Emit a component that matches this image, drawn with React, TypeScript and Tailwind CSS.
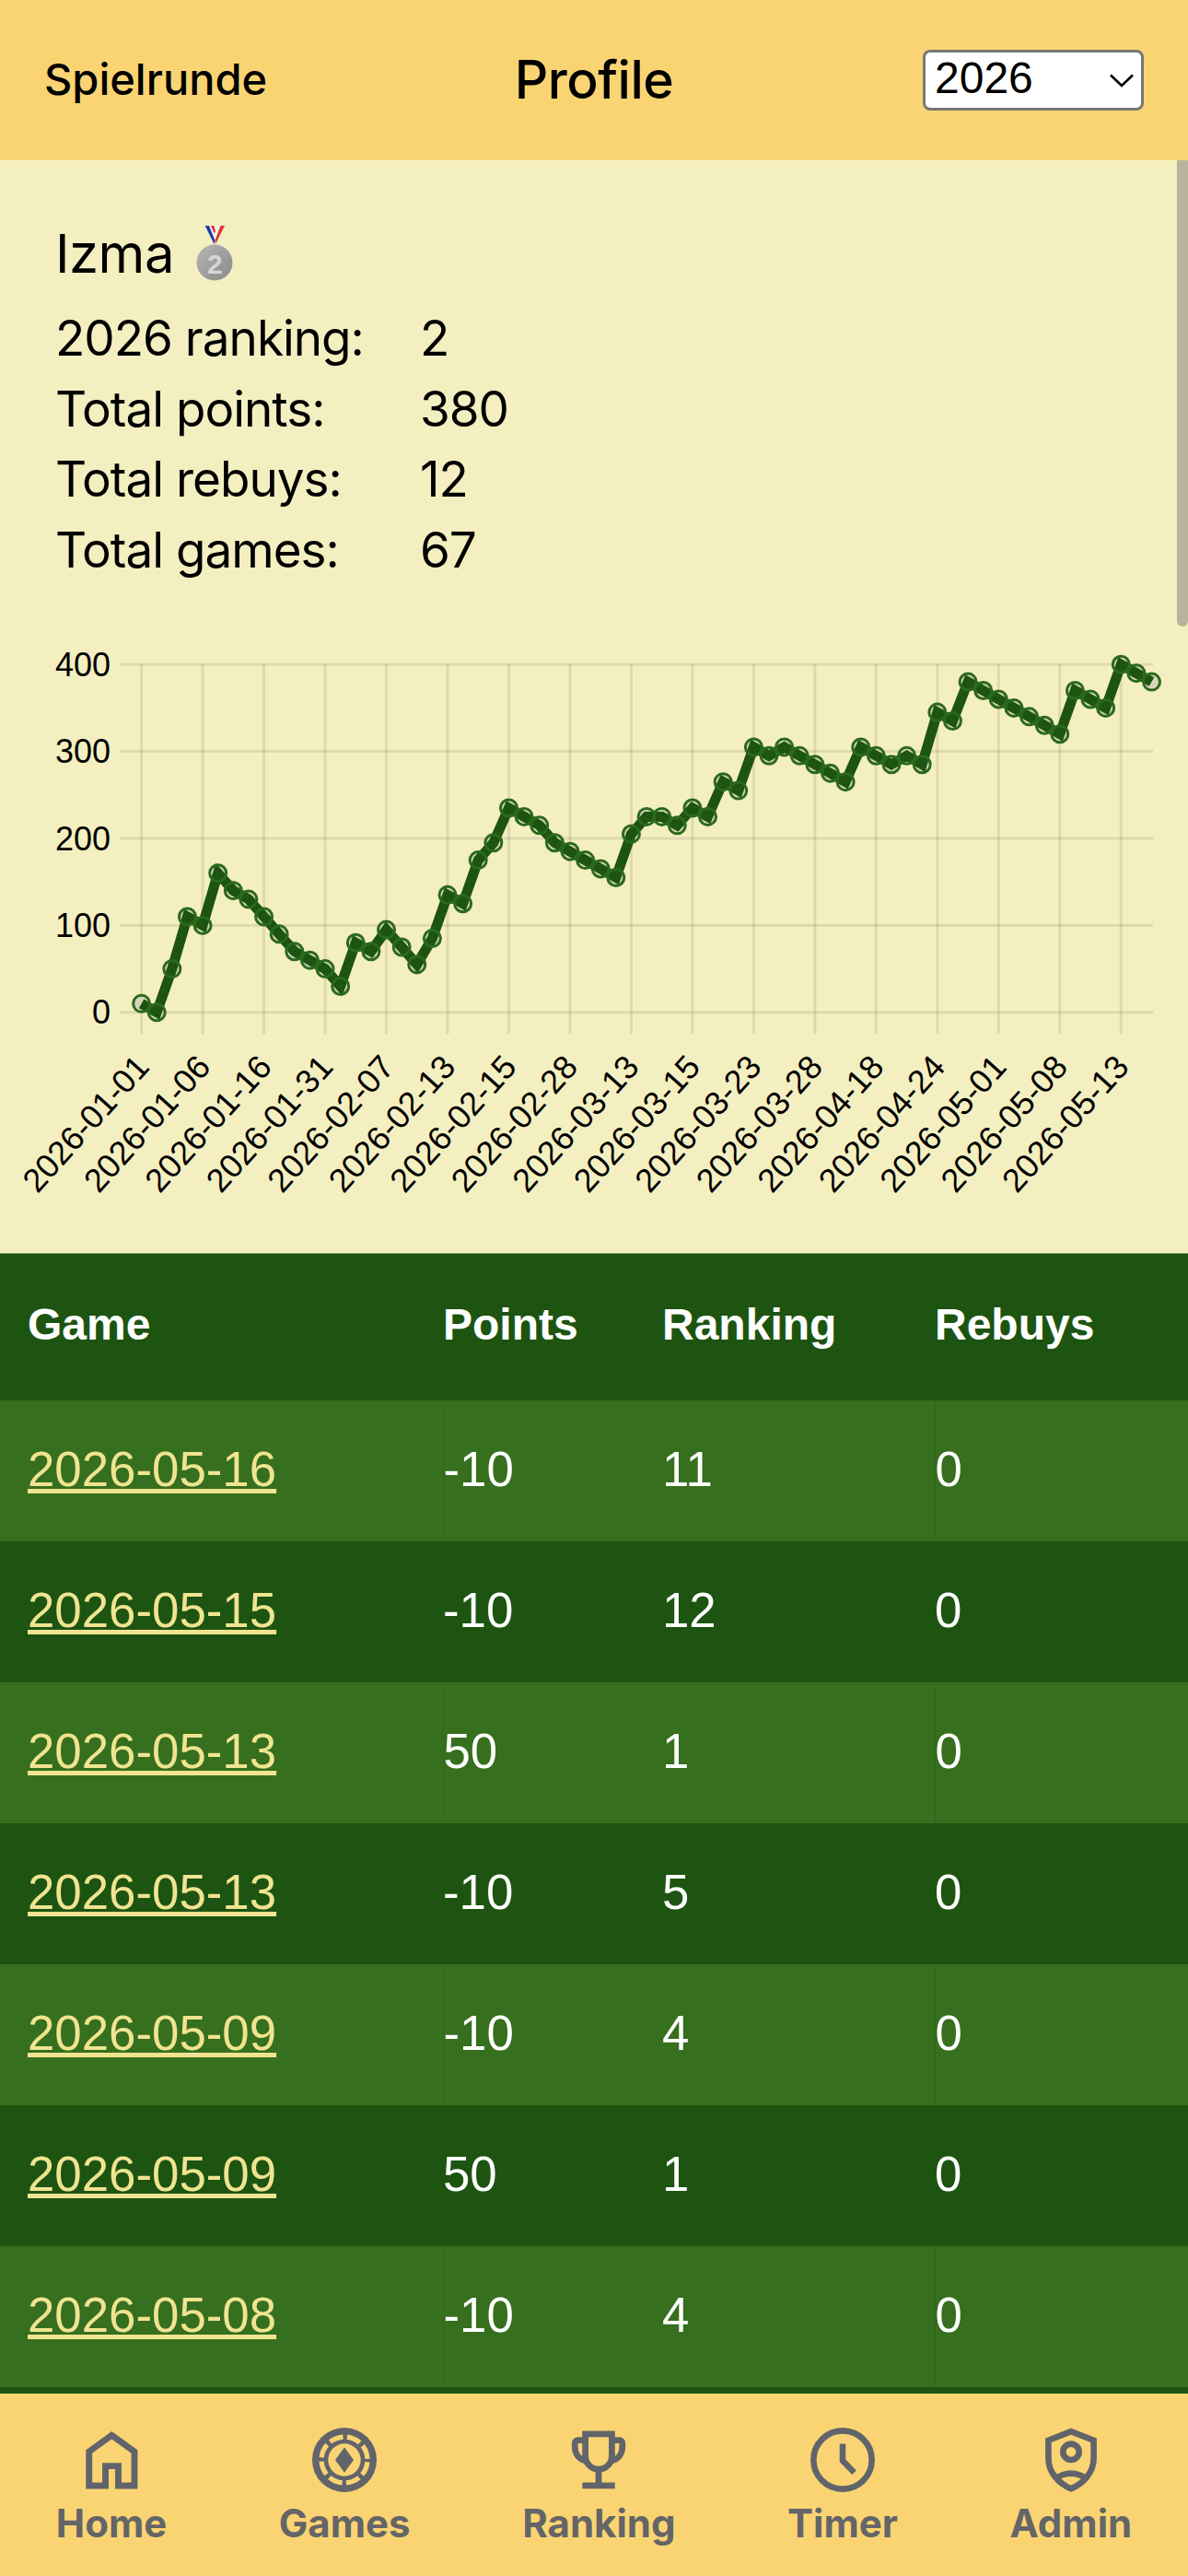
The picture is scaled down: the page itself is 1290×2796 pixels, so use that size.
import React from 'react';

const values = [
  10, 0, 50, 110, 100, 160, 140, 130, 110, 90, 70, 60, 50, 30, 80, 70, 95, 75, 55, 85, 135, 125, 175, 195, 235, 225,
  215, 195, 185, 175, 165, 155, 205, 225, 225, 215, 235, 225, 265, 255, 305, 295, 305, 295, 285, 275, 265, 305, 295,
  285, 295, 285, 345, 335, 380, 370, 360, 350, 340, 330, 320, 370, 360, 350, 400, 390, 380,
];

const labels = [
  '2026-01-01', '2026-01-06', '2026-01-16', '2026-01-31', '2026-02-07', '2026-02-13', '2026-02-15', '2026-02-28',
  '2026-03-13', '2026-03-15', '2026-03-23', '2026-03-28', '2026-04-18', '2026-04-24', '2026-05-01', '2026-05-08',
  '2026-05-13',
];

const games = [
  ['2026-05-16', '-10', '11', '0'],
  ['2026-05-15', '-10', '12', '0'],
  ['2026-05-13', '50', '1', '0'],
  ['2026-05-13', '-10', '5', '0'],
  ['2026-05-09', '-10', '4', '0'],
  ['2026-05-09', '50', '1', '0'],
  ['2026-05-08', '-10', '4', '0'],
];

const stats = [
  ['2026 ranking:', '2'],
  ['Total points:', '380'],
  ['Total rebuys:', '12'],
  ['Total games:', '67'],
];

const X0 = 153.6;
const STEP = 16.62;
const xAt = (i: number) => X0 + i * STEP;
// chart coordinates are relative to the svg top
const yAt = (v: number) => 408.8 - v * 0.944;

const Chart = () => {
  const line = values.map((v, i) => `${xAt(i)},${yAt(v)}`).join(' ');
  return (
    <svg className="block mt-[54px]" width="1290" height="670" viewBox="0 0 1290 670">
      {[0, 100, 200, 300, 400].map((v) => (
        <g key={v}>
          <line x1="130" x2="1252" y1={yAt(v)} y2={yAt(v)} stroke="rgba(0,0,0,0.09)" strokeWidth="3" />
          <text
            x="120"
            y={yAt(v)}
            textAnchor="end"
            dominantBaseline="central"
            fontFamily="Liberation Sans"
            fontSize="36"
            fill="#000"
          >
            {v}
          </text>
        </g>
      ))}
      {labels.map((label, i) => (
        <g key={label}>
          <line x1={xAt(i * 4)} x2={xAt(i * 4)} y1="31" y2="432" stroke="rgba(0,0,0,0.09)" strokeWidth="3" />
          <text
            transform={`translate(${xAt(i * 4) + 1} 461) rotate(-48)`}
            textAnchor="end"
            dominantBaseline="central"
            fontFamily="Liberation Sans"
            fontSize="36"
            fill="#000"
          >
            {label}
          </text>
        </g>
      ))}
      {values.map((v, i) => (
        <circle key={i} cx={xAt(i)} cy={yAt(v)} r="9" fill="#d6d5bb" />
      ))}
      <polyline points={line} fill="none" stroke="#1d5411" strokeWidth="11" strokeLinejoin="miter" />
      {values.map((v, i) => (
        <circle key={i} cx={xAt(i)} cy={yAt(v)} r="9" fill="none" stroke="#2b6a1c" strokeWidth="3" />
      ))}
    </svg>
  );
};

const Medal = () => (
  <svg className="ml-[24px]" width="40" height="60" viewBox="0 0 40 60">
    <defs>
      <linearGradient id="disc" x1="0" y1="0" x2="1" y2="1">
        <stop offset="0" stopColor="#b5b5b5" />
        <stop offset="1" stopColor="#8a8a8a" />
      </linearGradient>
    </defs>
    <polygon points="9.7,0 31,0 21,20 19.5,20" fill="#f4f4f0" />
    <polygon points="9.7,0 14,0 20.5,16 19.5,20" fill="#1f3fa8" />
    <polygon points="16,0 19.5,0 21,7 19.5,8" fill="#e0362c" />
    <polygon points="26.5,0 31,0 21,20 20.5,16" fill="#e0362c" />
    <circle cx="20" cy="40" r="19.5" fill="url(#disc)" />
    <text
      x="20"
      y="41"
      textAnchor="middle"
      dominantBaseline="central"
      fontFamily="Liberation Sans"
      fontWeight="700"
      fontSize="30"
      fill="#d6d6d6"
    >
      2
    </text>
  </svg>
);

const ICON = 'w-[72px] h-[72px] text-[#61646a]';

const HomeIcon = () => (
  <svg className={ICON} viewBox="0 0 24 24" fill="none" stroke="currentColor" strokeWidth="2.3">
    <path d="M3.9 21.33V9L12.1 3.1L20.33 9V21.33H14.5V14.22H9.84V21.33Z" />
  </svg>
);

const ChipIcon = () => (
  <svg className={ICON} viewBox="0 0 24 24">
    <circle cx="12" cy="12" r="11.67" fill="currentColor" />
    <circle cx="12" cy="12" r="8.33" fill="none" stroke="#fad473" strokeWidth="1.77" strokeDasharray="5.04 1.5" strokeDashoffset="-0.75" />
    <circle cx="12" cy="12" r="5.9" fill="#fad473" />
    <polygon points="12,7.45 15.33,12 12,16.55 8.67,12" fill="currentColor" />
  </svg>
);

const TrophyIcon = () => (
  <svg className={ICON} viewBox="0 0 24 24" fill="none" stroke="currentColor" strokeWidth="2.25">
    <path d="M7.2 2.6H16.8V10.6A4.8 4.8 0 0 1 7.2 10.6Z" />
    <path d="M7.2 4.9H4.4A1 1 0 0 0 3.4 5.9V7C3.4 10 5 12 7.6 12.4" />
    <path d="M16.8 4.9H19.6A1 1 0 0 1 20.6 5.9V7C20.6 10 19 12 16.4 12.4" />
    <path d="M12 15.5V21M6.1 21.33H17.9" />
  </svg>
);

const ClockIcon = () => (
  <svg className={ICON} viewBox="0 0 24 24" fill="none" stroke="currentColor" strokeWidth="2.2">
    <circle cx="12" cy="12" r="10.55" />
    <path d="M12 6.2V12.3L16.2 16.6" />
  </svg>
);

const ShieldIcon = () => (
  <svg className={ICON} viewBox="0 0 24 24" fill="none" stroke="currentColor" strokeWidth="2.2">
    <path d="M12 1.7L20.2 4.9V11.5C20.2 16.5 16.5 20.5 12 22.4C7.5 20.5 3.8 16.5 3.8 11.5V4.9Z" />
    <circle cx="12" cy="9.1" r="2.9" />
    <path d="M6.2 18.9Q12 14.8 17.8 18.9" />
  </svg>
);

const navItems = [
  { label: 'Home', icon: <HomeIcon /> },
  { label: 'Games', icon: <ChipIcon /> },
  { label: 'Ranking', icon: <TrophyIcon /> },
  { label: 'Timer', icon: <ClockIcon /> },
  { label: 'Admin', icon: <ShieldIcon /> },
];

const App = () => {
  return (
    <div className="w-[1290px] h-[2796px] flex flex-col overflow-hidden bg-[#f4efc0] font-['Inter',sans-serif] text-black">
      {/* Header */}
      <header className="h-[174px] shrink-0 bg-[#fad473] flex items-center justify-between pl-[48px] pr-[48px]">
        <span className="text-[47px] font-medium w-[240px] pb-[2px]">Spielrunde</span>
        <h1 className="text-[57px] font-medium tracking-[-0.5px]">Profile</h1>
        <div className="relative w-[240px] h-[66px]">
          <select
            defaultValue="2026"
            className="block w-full h-full appearance-none bg-white border-[3px] border-[#767676] rounded-[8px] pl-[10px] pt-0 pb-[5px] leading-[46px] font-['Liberation_Sans',sans-serif] text-[48px] text-black"
          >
            <option>2026</option>
          </select>
          <svg className="absolute left-[203px] top-[26px]" width="26" height="15" viewBox="0 0 26 15" fill="none">
            <path d="M1 1.5L13 13L25 1.5" stroke="#000" strokeWidth="2.6" />
          </svg>
        </div>
      </header>

      <main className="relative flex-1 flex flex-col overflow-hidden">
        {/* Overlay scrollbar */}
        <div className="absolute right-0 top-0 w-[12px] h-[506px] bg-[#b8b59c] rounded-b-[6px]" />

        <section className="h-[1186px] shrink-0">
          <div className="pt-[71px] pl-[60px]">
            <div className="flex items-end h-[60px] text-[58px] leading-[60px] tracking-[-0.5px]">
              <span>Izma</span>
              <Medal />
            </div>
            <dl className="mt-[24px] grid grid-cols-[396px_1fr] text-[53px] leading-[76.7px] tracking-[-1px]">
              {stats.map(([k, v]) => (
                <React.Fragment key={k}>
                  <dt>{k}</dt>
                  <dd>{v}</dd>
                </React.Fragment>
              ))}
            </dl>
          </div>
          <Chart />
        </section>

        {/* Games table */}
        <div className="flex-1 bg-[#1d5411] border-t border-[#7f9457] font-['Liberation_Sans',sans-serif] text-white">
          <table className="w-full table-fixed border-collapse text-left">
            <thead>
              <tr className="h-[159px] text-[48px] font-bold">
                <th className="w-[481px] pl-[30px] pb-[5px]">Game</th>
                <th className="w-[238px] pb-[5px]">Points</th>
                <th className="w-[296px] pb-[5px]">Ranking</th>
                <th className="pb-[5px]">Rebuys</th>
              </tr>
            </thead>
            <tbody className="text-[52.8px]">
              {games.map((g, i) => {
                const light = i % 2 === 0;
                return (
                  <tr key={i} className={light ? 'h-[153px] bg-[#366f1e]' : 'h-[153px] bg-[#1d5411]'}>
                    <td className={light ? 'pl-[30px] pb-[3px] border-r border-[#30681d]' : 'pl-[30px] pb-[3px]'}>
                      <a href="#" className="text-[#f0e491] underline">
                        {g[0]}
                      </a>
                    </td>
                    <td className="pb-[3px]">{g[1]}</td>
                    <td className={light ? 'pb-[3px] border-r border-[#30681d]' : 'pb-[3px]'}>{g[2]}</td>
                    <td className="pb-[3px]">{g[3]}</td>
                  </tr>
                );
              })}
            </tbody>
          </table>
        </div>
      </main>

      {/* Bottom nav */}
      <nav className="h-[198px] shrink-0 bg-[#fad473] flex justify-around items-start pt-[36px]">
        {navItems.map((item) => (
          <div key={item.label} className="flex flex-col items-center text-[#646567]">
            {item.icon}
            <span className="text-[42px] leading-[52px] mt-[7px] font-bold">{item.label}</span>
          </div>
        ))}
      </nav>
    </div>
  );
};

export default App;
